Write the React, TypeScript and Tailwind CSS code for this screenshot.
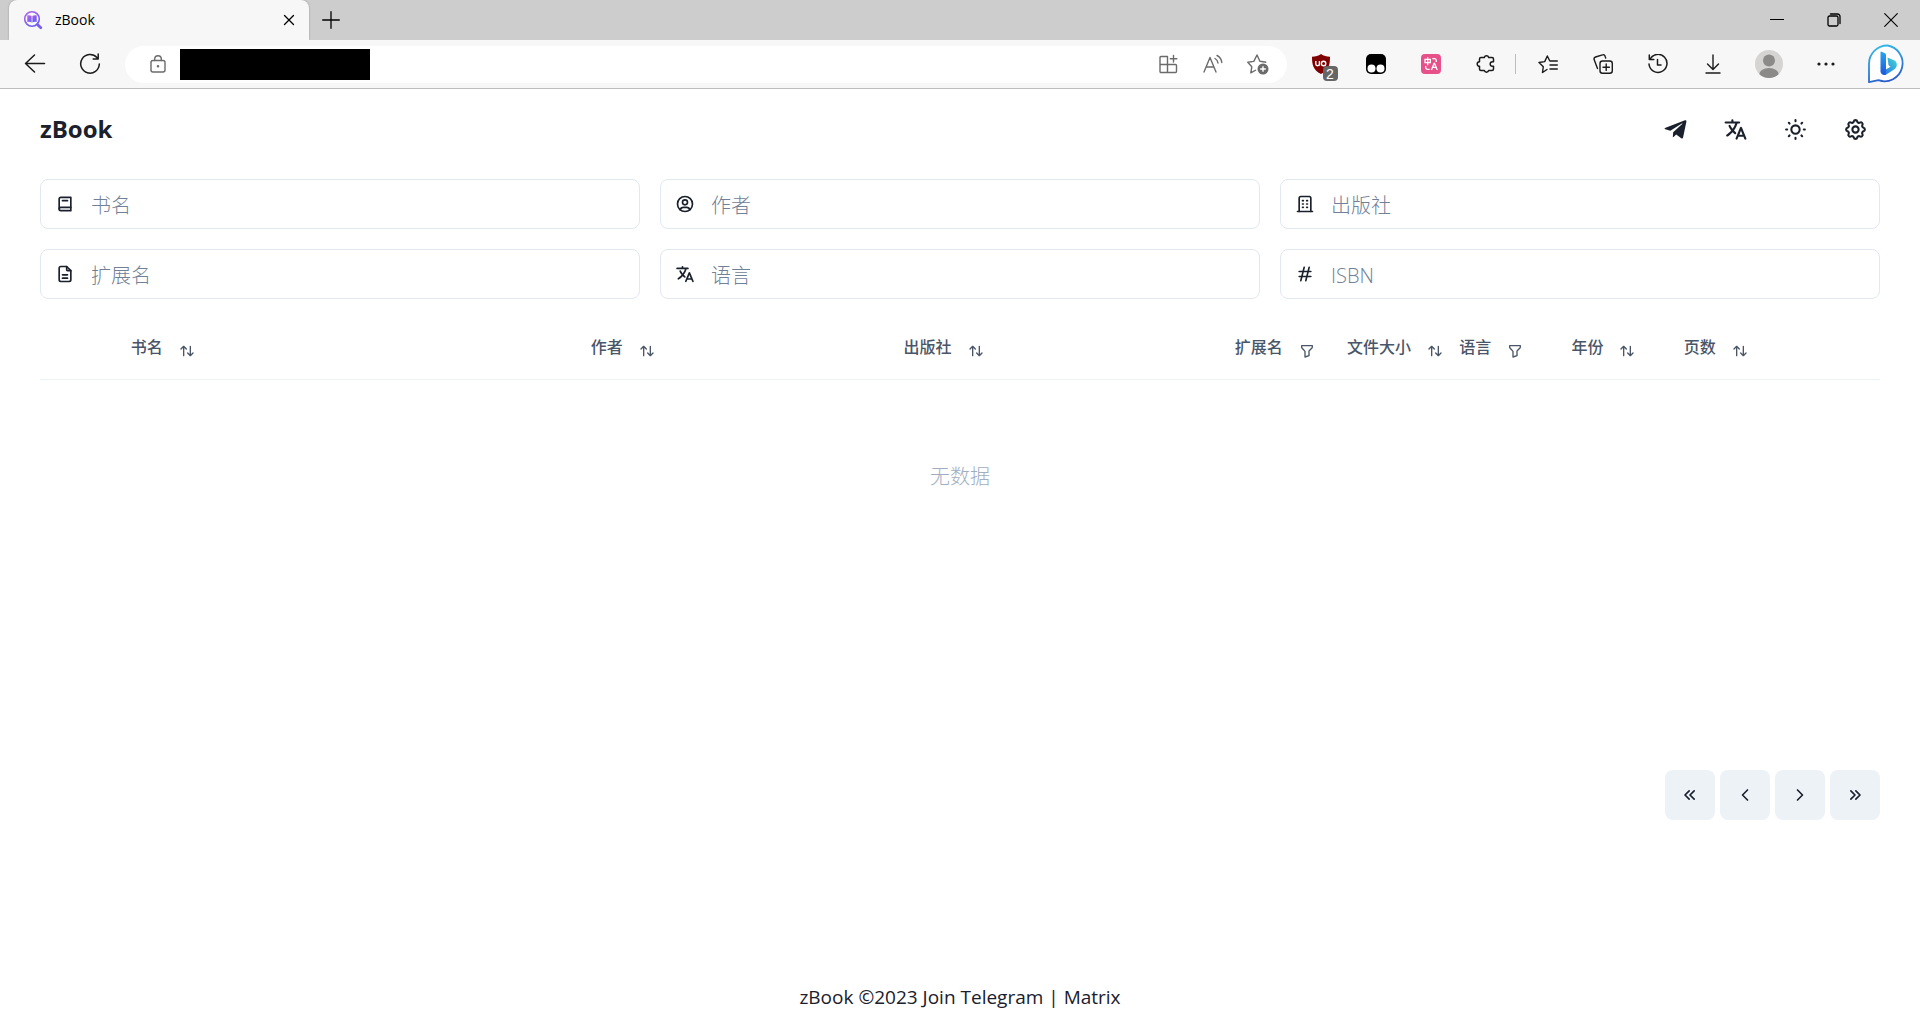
import React, { useState } from 'react';
import { FaTelegramPlane } from 'react-icons/fa';
import { IoLanguage } from 'react-icons/io5';
import { RiTranslate } from 'react-icons/ri';
import {
  TbArrowsSort,
  TbBook2,
  TbBuilding,
  TbChevronLeft,
  TbChevronRight,
  TbChevronsLeft,
  TbChevronsRight,
  TbFileDescription,
  TbFilter,
  TbHash,
  TbSettings,
  TbSun,
  TbUserCircle,
} from 'react-icons/tb';

const fields = [
  { id: 'title', label: '书名', icon: TbBook2 },
  { id: 'author', label: '作者', icon: TbUserCircle },
  { id: 'publisher', label: '出版社', icon: TbBuilding },
  { id: 'extension', label: '扩展名', icon: TbFileDescription },
  { id: 'language', label: '语言', icon: IoLanguage },
  { id: 'isbn', label: 'ISBN', icon: TbHash },
];

const columns = [
  { label: '', width: 'w-[3.3%]' },
  { label: '书名', width: 'w-[25%]', icon: TbArrowsSort },
  { label: '作者', width: 'w-[17%]', icon: TbArrowsSort },
  { label: '出版社', width: 'w-[18%]', icon: TbArrowsSort },
  { label: '扩展名', width: 'w-[6.1%]', icon: TbFilter },
  { label: '文件大小', width: 'w-[6.1%]', icon: TbArrowsSort },
  { label: '语言', width: 'w-[6.1%]', icon: TbFilter },
  { label: '年份', width: 'w-[6.1%]', icon: TbArrowsSort },
  { label: '页数', width: 'w-[6.1%]', icon: TbArrowsSort },
  { label: '', width: 'w-[6.2%]' },
];

const headerButtons = [
  { label: 'Telegram', icon: FaTelegramPlane },
  { label: 'Language', icon: IoLanguage },
  { label: 'Theme', icon: TbSun },
  { label: 'Settings', icon: TbSettings },
];

const pageButtons = [
  { label: 'First page', icon: TbChevronsLeft },
  { label: 'Previous page', icon: TbChevronLeft },
  { label: 'Next page', icon: TbChevronRight },
  { label: 'Last page', icon: TbChevronsRight },
];

function Line({ children, size = 20, width = 1.3 }: any) {
  return (
    <svg
      width={size}
      height={size}
      viewBox={`0 0 ${size} ${size}`}
      fill="none"
      stroke="currentColor"
      strokeWidth={width}
      strokeLinecap="round"
      strokeLinejoin="round"
    >
      {children}
    </svg>
  );
}

function ToolButton({ label, children }: any) {
  return (
    <button aria-label={label} className="flex h-9 w-[55px] items-center justify-center">
      {children}
    </button>
  );
}

function TabBar() {
  return (
    <div className="flex h-10 items-stretch bg-[#cdcdcd] pl-[9px]">
      <div className="flex w-[300px] items-center rounded-t-lg bg-[#f7f7f7] pl-[14px] pr-[6px] shadow-[0_0_2px_rgba(0,0,0,0.3)]">
        <svg width="20" height="20" viewBox="0 0 20 20" fill="none">
          <defs>
            <linearGradient id="fav" x1="0" y1="0" x2="0.6" y2="1">
              <stop offset="0" stopColor="#b565e8" />
              <stop offset="1" stopColor="#6a5cf5" />
            </linearGradient>
          </defs>
          <circle cx="9" cy="9" r="7.3" stroke="url(#fav)" strokeWidth="1.6" />
          <path d="M14.4 14.4l3.4 3.4" stroke="#7a5cf0" strokeWidth="2.8" strokeLinecap="round" />
          <path d="M4.3 5.6c1.5-.4 3-.3 4.3.5v6.300c-1.300-.7-2.800-.8-4.300-.4z M13.700 5.600c-1.500-.4-3-.3-4.300.5v6.300c1.300-.7 2.800-.8 4.300-.4z" fill="url(#fav)" />
        </svg>
        <span className="ml-3 flex-1 text-sm text-black">zBook</span>
        <button aria-label="Close tab" className="flex size-7 items-center justify-center text-black">
          <Line size={12}>
            <path d="M1.5 1.5l9 9M10.5 1.5l-9 9" />
          </Line>
        </button>
      </div>
      <button aria-label="New tab" className="flex w-11 items-center justify-center text-black">
        <Line size={18}>
          <path d="M9 .7v16.600M.7 9h16.600" />
        </Line>
      </button>
      <div className="ml-auto flex pr-px text-black">
        <button aria-label="Minimize" className="flex w-[57px] items-center justify-center">
          <Line size={14} width={1.2}>
            <path d="M.5 6.500h13" />
          </Line>
        </button>
        <button aria-label="Restore" className="flex w-[57px] items-center justify-center">
          <Line size={14}>
            <rect x="1" y="3" width="10" height="10" rx="1.5" />
            <path d="M3.500 1h7a2.500 2.500 0 0 1 2.500 2.500v7" />
          </Line>
        </button>
        <button aria-label="Close" className="flex w-[57px] items-center justify-center">
          <Line size={14} width={1.1}>
            <path d="M.7.7l12.600 12.600M13.300.7L.7 13.300" />
          </Line>
        </button>
      </div>
    </div>
  );
}

function AddressBar() {
  return (
    <div className="flex h-[49px] items-center border-b border-[#bdbdbd] bg-[#f7f7f7] pl-[7px] text-[#1b1b1b]">
      <ToolButton label="Back">
        <Line size={22} width={1.5}>
          <path d="M20.500 10.500H1.500M10.500 2l-9 8.500 9 8.500" />
        </Line>
      </ToolButton>
      <ToolButton label="Refresh">
        <Line size={22} width={1.5}>
          <path d="M17.900 4.600A9.300 9.300 0 1 0 20.300 11M19.200 1v5h-5" />
        </Line>
      </ToolButton>
      <div className="ml-2 flex h-[37px] flex-1 items-center rounded-full bg-white pl-6 pr-[7px] text-[#6b6b6b]">
        <Line size={18} width={1.4}>
          <rect x="2" y="5.500" width="14" height="11.500" rx="2" />
          <path d="M5.700 5.500V4a3.300 3.300 0 0 1 6.600 0v1.500" />
          <circle cx="9" cy="11.300" r=".6" fill="currentColor" />
        </Line>
        <div className="ml-[13px] h-[31px] w-[190px] bg-black" />
        <div className="ml-auto flex">
          <button aria-label="Apps" className="flex w-[45px] items-center justify-center">
            <Line size={20} width={1.4}>
              <path d="M2 3.500a1 1 0 0 1 1-1h6.500v16H3a1 1 0 0 1-1-1zM2 10.500h15.500a1 1 0 0 1 1 1v6a1 1 0 0 1-1 1h-8M15.500 1.500v6.500M12.300 4.800h6.500" />
            </Line>
          </button>
          <button aria-label="Read aloud" className="flex w-[45px] items-center justify-center">
            <Line size={20} width={1.4}>
              <path d="M1 18L7 3.500 13 18M3.200 13h7.600M12 4.500c1.700.9 2.700 2.500 3 4.500M14 1.500c2.800 1.400 4.400 3.900 4.800 7" />
            </Line>
          </button>
          <button aria-label="Add to favorites" className="flex w-[45px] items-center justify-center">
            <svg width="22" height="22" viewBox="0 0 22 22" fill="none" stroke="currentColor" strokeWidth="1.4" strokeLinejoin="round">
              <path d="M9 17l-5.200 2.800 1-6L.8 9.300l6-.9L10 2l2.900 6.200 6.400 1" />
              <circle cx="16" cy="16" r="5.500" fill="currentColor" stroke="none" />
              <path d="M16 13.200v5.600M13.200 16h5.600" stroke="#fff" />
            </svg>
          </button>
        </div>
      </div>
      <div className="ml-[6px] flex items-center">
        <ToolButton label="uBlock Origin">
          <span className="relative">
            <svg width="20" height="20" viewBox="0 0 20 20">
              <path d="M10 0c2.500 1.800 5.500 2.500 9 2.700 0 8-1 13-9 17.300C2 15.700 1 10.700 1 2.700 4.500 2.500 7.500 1.800 10 0z" fill="#800000" />
              <path d="M4.800 7v3a1.800 1.800 0 0 0 3.600 0V7v4.800" fill="none" stroke="#fff" strokeWidth="1.4" />
              <circle cx="12.600" cy="9.500" r="2.200" fill="none" stroke="#fff" strokeWidth="1.4" />
            </svg>
            <span className="absolute left-3 top-3 flex size-[15px] items-center justify-center rounded-sm bg-[#666] font-['Liberation_Sans'] text-sm leading-none text-white">2</span>
          </span>
        </ToolButton>
        <ToolButton label="Tampermonkey">
          <svg width="20" height="20" viewBox="0 0 20 20">
            <rect x="0" y="0" width="20" height="20" rx="5" fill="#000" />
            <circle cx="5.500" cy="14.500" r="4" fill="#fff" />
            <circle cx="14.500" cy="14.500" r="4" fill="#fff" />
          </svg>
        </ToolButton>
        <ToolButton label="Translate">
          <span className="flex size-5 items-center justify-center rounded-sm bg-[#e8508a]">
            <RiTranslate className="size-4 text-white" />
          </span>
        </ToolButton>
        <ToolButton label="Extensions">
          <Line size={20} width={1.5}>
            <path d="M5 3.500h3.300a2.300 2.300 0 0 1 4.400 0H16a1.500 1.500 0 0 1 1.500 1.500v2.700h-1a2.300 2.300 0 0 0 0 4.600h1V15a1.500 1.500 0 0 1-1.500 1.500h-3.300a2.300 2.300 0 0 1-4.400 0H5A1.500 1.500 0 0 1 3.500 15v-2.700a2.300 2.300 0 0 1 0-4.600V5A1.500 1.500 0 0 1 5 3.500z" />
          </Line>
        </ToolButton>
      </div>
      <div className="mx-[2px] h-5 w-px bg-[#bdbdbd]" />
      <div className="ml-[2px] flex items-center">
        <ToolButton label="Favorites">
          <Line size={20} width={1.4}>
            <path d="M9 15.500l-4.500 3 .8-5.800L1 8.500l5.700-.9L9.300 2l2.400 4.800M12 7h7.300M12 11h7.300M12 15h7.300" />
          </Line>
        </ToolButton>
        <ToolButton label="Collections">
          <Line size={20} width={1.4}>
            <rect x="7" y="7" width="12.300" height="12.300" rx="2.500" />
            <path d="M13.200 10v6.400M10 13.200h6.400M4.500 14.500L1.200 5.800A2.200 2.200 0 0 1 2.500 3L9.500.9a2 2 0 0 1 2.600 1.300l.6 1.800" />
          </Line>
        </ToolButton>
        <ToolButton label="History">
          <Line size={20} width={1.5}>
            <path d="M2 5.200A9 9 0 1 1 1 10M1.300 1v4.500h4.500M9.500 5.500v5.500h3.500" />
          </Line>
        </ToolButton>
        <ToolButton label="Downloads">
          <Line size={20} width={1.4}>
            <path d="M10 1v14M4.500 10l5.500 5.500L15.500 10M3 19h14" />
          </Line>
        </ToolButton>
        <button aria-label="Profile" className="flex h-9 w-[57px] items-center justify-center">
          <svg width="28" height="28" viewBox="0 0 28 28">
            <defs>
              <clipPath id="face">
                <circle cx="14" cy="14" r="14" />
              </clipPath>
            </defs>
            <g clipPath="url(#face)">
              <rect width="28" height="28" fill="#d6d4d3" />
              <circle cx="14" cy="10.500" r="6" fill="#8c8a89" />
              <ellipse cx="14" cy="25" rx="10" ry="7" fill="#8c8a89" />
            </g>
          </svg>
        </button>
        <button aria-label="More" className="flex h-9 w-[57px] items-center justify-center">
          <svg width="18" height="4" viewBox="0 0 18 4" fill="currentColor">
            <circle cx="2" cy="2" r="1.600" />
            <circle cx="9" cy="2" r="1.600" />
            <circle cx="16" cy="2" r="1.600" />
          </svg>
        </button>
        <button aria-label="Bing" className="flex w-[66px] items-center justify-center">
          <svg width="40" height="40" viewBox="0 0 40 40" fill="none">
            <defs>
              <linearGradient id="ring" x1="0.300" y1="0" x2="0.600" y2="1">
                <stop offset="0" stopColor="#35b9ea" />
                <stop offset="1" stopColor="#2a59c8" />
              </linearGradient>
              <linearGradient id="stem" x1="0" y1="0" x2="0" y2="1">
                <stop offset="0" stopColor="#2aa5f4" />
                <stop offset="1" stopColor="#1c56d8" />
              </linearGradient>
              <linearGradient id="bowl" x1="1" y1="0" x2="0" y2="1">
                <stop offset="0" stopColor="#3fdcd0" />
                <stop offset="1" stopColor="#2b6cec" />
              </linearGradient>
            </defs>
            <path d="M20.500 1.500A18 18 0 1 1 11.500 36.200L2 38.200V20A18.300 18.300 0 0 1 20.500 1.500z" fill="#fff" stroke="url(#ring)" strokeWidth="1.800" strokeLinejoin="round" />
            <path d="M20.500 13.500l6.500 2.700c3.700 1.800 3.700 6.800.5 9L18.500 31c-2.500 0-3.500-2-3-3.500l8-4.800-2-1.500z" fill="url(#bowl)" />
            <path d="M14 7.500l4 1.800c.6.300 1 .9 1 1.600V26l-.4 4.900c-2.600.6-5.100-1-5.100-3.700V8z" fill="url(#stem)" />
          </svg>
        </button>
      </div>
    </div>
  );
}

export default function App() {
  const [query, setQuery] = useState<any>({});

  return (
    <div className="flex min-h-screen flex-col bg-white font-['Open_Sans','Noto_Sans_CJK_SC',sans-serif] text-[#1a202c]">
      <TabBar />
      <AddressBar />

      <header className="flex items-center justify-between px-10 pb-[17px] pt-[15px]">
        <h1 className="text-2xl font-bold">zBook</h1>
        <div className="flex gap-[10px]">
          {headerButtons.map(({ label, icon: Icon }) => (
            <button key={label} aria-label={label} className="flex size-[50px] items-center justify-center rounded-lg">
              <Icon className="size-[25px]" />
            </button>
          ))}
        </div>
      </header>

      <main className="px-10 pt-2">
        <form className="grid grid-cols-3 gap-5">
          {fields.map(({ id, label, icon: Icon }) => (
            <label key={id} className="flex h-[50px] items-center rounded-lg border border-[#e2e8f0] pl-[14px]">
              <Icon className="size-5" />
              <input
                aria-label={label}
                placeholder={label}
                value={query[id] || ''}
                onChange={(e) => setQuery({ ...query, [id]: e.target.value })}
                className="ml-4 min-w-0 flex-1 bg-transparent pt-1 text-xl font-light outline-none placeholder:text-[#718096]"
              />
            </label>
          ))}
        </form>

        <table className="mt-5 w-full table-fixed">
          <thead>
            <tr className="border-b border-[#edf2f7]">
              {columns.map(({ label, width, icon: Icon }, i) => (
                <th key={i} className={`${width} h-[60px] whitespace-nowrap pb-1 pl-[30px] text-left text-base font-medium text-[#4a5568]`}>
                  {Icon && (
                    <div className="flex items-center">
                      {label}
                      <button aria-label={`${label} options`} className="ml-4 pt-2">
                        <Icon className="size-4" />
                      </button>
                    </div>
                  )}
                </th>
              ))}
            </tr>
          </thead>
          <tbody>
            <tr>
              <td colSpan={columns.length} className="h-[192px] pt-1 text-center text-xl font-light text-[#a0aec0]">
                无数据
              </td>
            </tr>
          </tbody>
        </table>

        <nav className="mt-[199px] flex justify-end gap-[5px]">
          {pageButtons.map(({ label, icon: Icon }) => (
            <button key={label} aria-label={label} className="flex size-[50px] items-center justify-center rounded-lg bg-[#edf2f7]">
              <Icon className="size-5" />
            </button>
          ))}
        </nav>
      </main>

      <footer className="mt-auto text-center text-[19px] leading-[30px]">
        zBook ©2023 Join <a href="#telegram">Telegram</a> | <a href="#matrix">Matrix</a>
      </footer>
    </div>
  );
}
